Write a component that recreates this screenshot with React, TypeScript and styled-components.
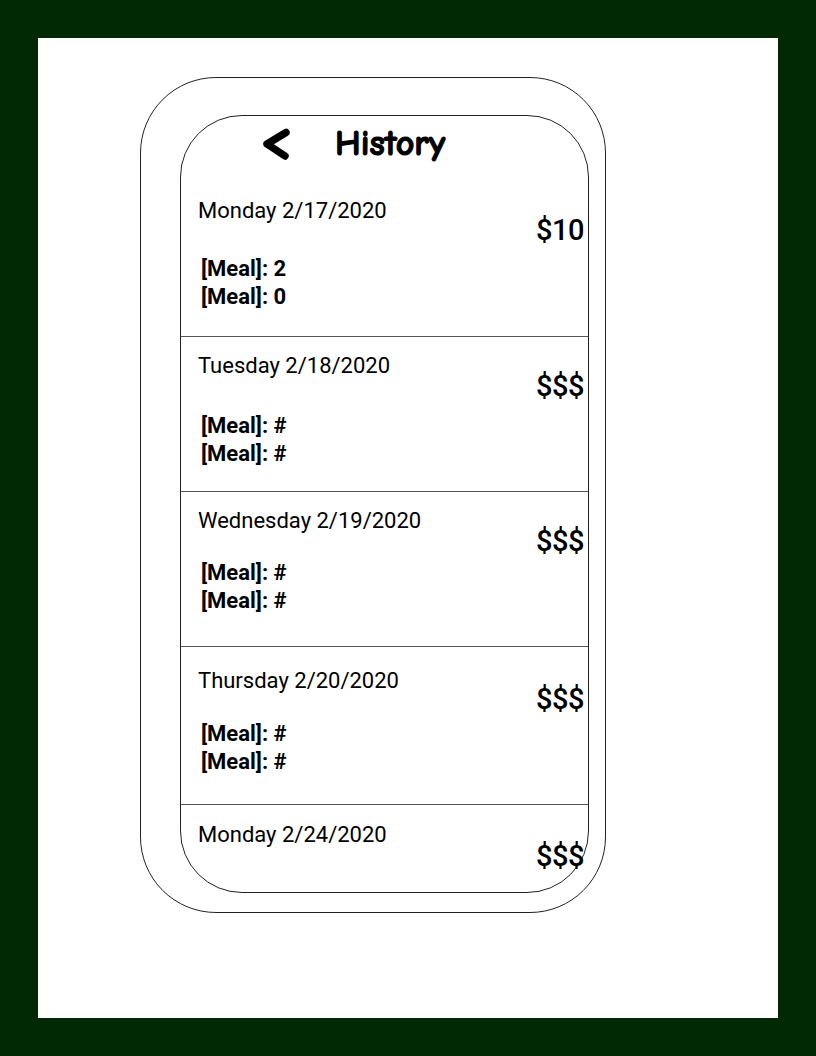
import styled, { createGlobalStyle } from "styled-components";

const GlobalStyle = createGlobalStyle`
  html, body {
    margin: 0;
    padding: 0;
    background: #002904;
  }
`;

const Frame = styled.div`
  width: 816px;
  height: 1056px;
  box-sizing: border-box;
  padding: 38px;
  background: #002904;
`;

const Sheet = styled.div`
  width: 740px;
  height: 980px;
  background: #ffffff;
  box-sizing: border-box;
  padding: 39px 0 0 102px;
`;

const Phone = styled.div`
  width: 466px;
  height: 836px;
  box-sizing: border-box;
  border: 1px solid #222;
  border-radius: 76px;
  padding: 37px 16px 19px 39px;
  display: flex;
`;

const Screen = styled.div`
  flex: 1;
  border: 1px solid #222;
  border-radius: 62px;
  display: flex;
  flex-direction: column;
  font-family: Roboto, "Liberation Sans", sans-serif;
  color: #000;
`;

const Header = styled.div`
  height: 66px;
  flex-shrink: 0;
  box-sizing: border-box;
  display: flex;
  align-items: flex-start;
  padding: 12px 0 0 81px;
  gap: 44px;
`;

const BackButton = styled.button`
  border: none;
  background: none;
  padding: 0;
  margin: 0;
  width: 29px;
  height: 32px;
  cursor: pointer;
  display: block;
`;

const Title = styled.h1`
  margin: -5px 0 0;
  font-family: "Comic Sans MS", "Comic Neue", "DejaVu Sans Condensed", "DejaVu Sans", sans-serif;
  font-weight: bold;
  font-size: 36px;
  line-height: 42px;
  -webkit-text-stroke: 1.1px #000;
`;

const Row = styled.div<{ $height?: number; $pad: number }>`
  ${(p) => (p.$height ? `height: ${p.$height}px;` : "flex: 1;")}
  flex-shrink: 0;
  box-sizing: border-box;
  padding: ${(p) => p.$pad}px 0 0 17px;
  border-bottom: ${(p) => (p.$height ? "1px solid #555" : "none")};
  display: flex;
  align-items: flex-start;
  justify-content: space-between;
`;

const Details = styled.div`
  display: flex;
  flex-direction: column;
`;

const DateLine = styled.div`
  font-size: 22px;
  line-height: 28px;
`;

const Meals = styled.div<{ $gap: number }>`
  margin-top: ${(p) => p.$gap}px;
  padding-left: 3px;
  font-size: 22px;
  line-height: 28px;
  font-weight: bold;
`;

const Price = styled.div<{ $top: number }>`
  width: 52px;
  margin-top: ${(p) => p.$top}px;
  font-size: 29px;
  line-height: 28px;
  font-weight: 500;
  letter-spacing: -0.5px;
  white-space: nowrap;
`;

type Day = {
  date: string;
  price: string;
  meals: string[];
  height?: number;
  pad: number;
  mealGap: number;
  priceTop: number;
};

const days: Day[] = [
  { date: "Monday 2/17/2020", price: "$10", meals: ["[Meal]: 2", "[Meal]: 0"], height: 155, pad: 15, mealGap: 30, priceTop: 19 },
  { date: "Tuesday 2/18/2020", price: "$$$", meals: ["[Meal]: #", "[Meal]: #"], height: 155, pad: 15, mealGap: 32, priceTop: 20 },
  { date: "Wednesday 2/19/2020", price: "$$$", meals: ["[Meal]: #", "[Meal]: #"], height: 155, pad: 15, mealGap: 24, priceTop: 20 },
  { date: "Thursday 2/20/2020", price: "$$$", meals: ["[Meal]: #", "[Meal]: #"], height: 158, pad: 20, mealGap: 25, priceTop: 18 },
  { date: "Monday 2/24/2020", price: "$$$", meals: [], pad: 16, mealGap: 0, priceTop: 21 },
];

function ChevronLeft() {
  return (
    <svg width="29" height="32" viewBox="0 0 29 32">
      <polyline
        points="24,4.5 5,16 23,28"
        fill="none"
        stroke="#000"
        strokeWidth="7.5"
        strokeLinecap="round"
        strokeLinejoin="round"
      />
    </svg>
  );
}

function App() {
  return (
    <Frame>
      <GlobalStyle />
      <Sheet>
        <Phone>
          <Screen>
            <Header>
              <BackButton aria-label="Back">
                <ChevronLeft />
              </BackButton>
              <Title>History</Title>
            </Header>
            {days.map((d) => (
              <Row key={d.date} $height={d.height} $pad={d.pad}>
                <Details>
                  <DateLine>{d.date}</DateLine>
                  {d.meals.length > 0 && (
                    <Meals $gap={d.mealGap}>
                      {d.meals.map((m, i) => (
                        <div key={i}>{m}</div>
                      ))}
                    </Meals>
                  )}
                </Details>
                <Price $top={d.priceTop}>{d.price}</Price>
              </Row>
            ))}
          </Screen>
        </Phone>
      </Sheet>
    </Frame>
  );
}

export default App;
